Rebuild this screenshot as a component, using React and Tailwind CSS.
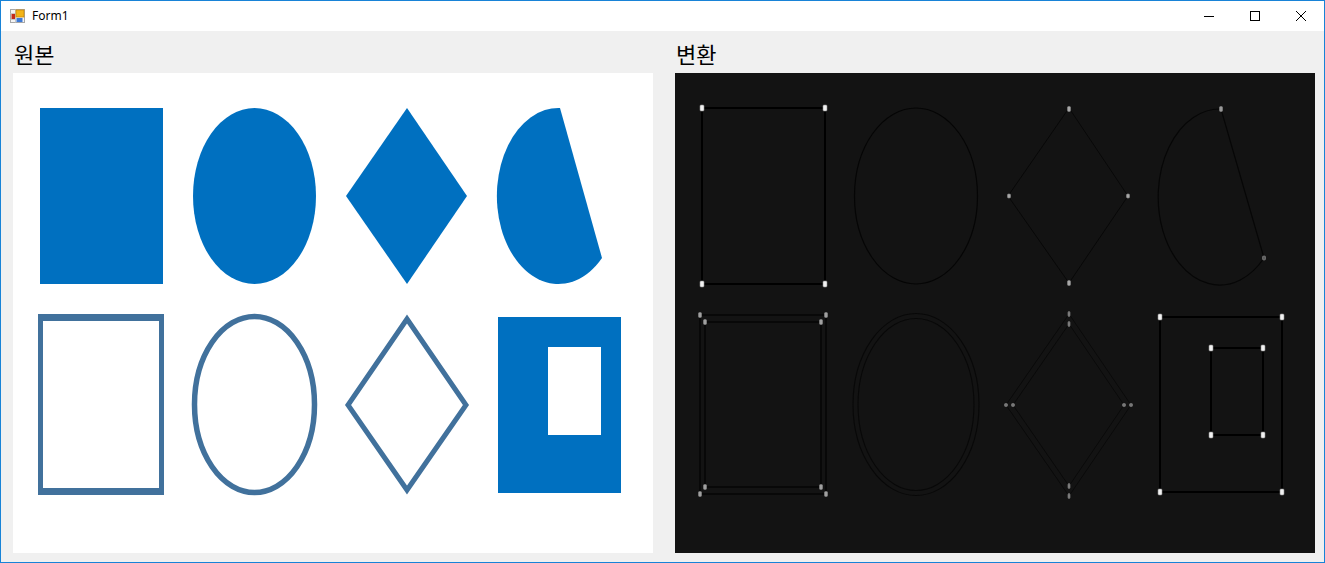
import React from 'react';

const BLUE = '#0070c0';
const STEEL = '#41719c';

const Mark = ({ x, y, w = 4, h = 6, fill = '#f2f2f2' }) => (
  <rect x={x - w / 2} y={y - h / 2} width={w} height={h} rx={1} fill={fill} stroke="#8a8a8a" strokeWidth={0.6} />
);

const FormIcon = () => (
  <svg width="15" height="14" viewBox="0 0 15 14">
    <rect x="0.5" y="0.5" width="14" height="13" fill="#f4f4f4" stroke="#a8a8a8" />
    <path d="M0.5 4.5 H5.5 M5.5 0.5 V13.5 M0.5 10.5 H5.5" stroke="#c8c8c8" strokeWidth="1" />
    <rect x="6" y="1" width="8" height="7" fill="#f2b418" stroke="#c8870a" strokeWidth="0.8" />
    <rect x="1.5" y="5" width="3.5" height="5" fill="#c42a1a" />
    <rect x="6.5" y="9" width="6" height="4" fill="#3d79d6" />
  </svg>
);

const Original = () => (
  <svg width="640" height="480" viewBox="0 0 640 480" className="block">
    <rect x="0" y="0" width="640" height="480" fill="#ffffff" />
    {/* row 1 */}
    <rect x="27" y="35" width="123" height="176" fill={BLUE} />
    <ellipse cx="241.5" cy="123" rx="61.5" ry="88" fill={BLUE} />
    <path d="M394 35 L454 123 L394 211 L333 123 Z" fill={BLUE} />
    <path d="M547 35 A61.5 88 0 1 0 589 185 Z" fill={BLUE} />
    {/* row 2 */}
    <path d="M25 241 H151 V422 H25 Z M30 248 V415 H146 V248 Z" fill={STEEL} fillRule="evenodd" />
    <ellipse cx="241.5" cy="331.5" rx="60" ry="88" fill="none" stroke={STEEL} strokeWidth="5.5" />
    <path d="M394 246 L453 332 L394 417 L335 332 Z" fill="none" stroke={STEEL} strokeWidth="5" strokeLinejoin="miter" />
    <path d="M485 244 H608 V420 H485 Z M535 274 V362 H588 V274 Z" fill={BLUE} fillRule="evenodd" />
  </svg>
);

const Converted = () => (
  <svg width="640" height="480" viewBox="0 0 640 480" className="block">
    <rect x="0" y="0" width="640" height="480" fill="#131313" />
    {/* row 1 */}
    <rect x="27" y="35" width="123" height="176" fill="none" stroke="#000" strokeWidth="2" />
    <ellipse cx="241" cy="123" rx="61.5" ry="88" fill="none" stroke="#050505" strokeWidth="1.2" />
    <path d="M394 35 L453 123 L394 210 L333 123 Z" fill="none" stroke="#080808" strokeWidth="1" />
    <path d="M546 36 A61.5 88 0 1 0 589 185 Z" fill="none" stroke="#060606" strokeWidth="1.2" />
    <Mark x={27} y={35} />
    <Mark x={150} y={35} />
    <Mark x={27} y={211} />
    <Mark x={150} y={211} />
    <Mark x={394} y={36} w={3} h={5} fill="#a8a8a8" />
    <Mark x={334} y={123} w={3} h={4} fill="#a8a8a8" />
    <Mark x={453} y={123} w={3} h={4} fill="#a8a8a8" />
    <Mark x={394} y={210} w={3} h={5} fill="#a8a8a8" />
    <Mark x={546} y={36} w={3} h={5} fill="#9a9a9a" />
    <Mark x={589} y={185} w={3} h={4} fill="#5e5e5e" />
    {/* row 2 */}
    <rect x="25" y="242" width="126" height="179" fill="none" stroke="#070707" strokeWidth="1.6" />
    <rect x="30" y="249" width="116" height="165" fill="none" stroke="#070707" strokeWidth="1.6" />
    <ellipse cx="241" cy="331.5" rx="63" ry="91" fill="none" stroke="#080808" strokeWidth="1.1" />
    <ellipse cx="241" cy="331.5" rx="58" ry="86" fill="none" stroke="#080808" strokeWidth="1.1" />
    <path d="M394 241 L456 332 L394 423 L331 332 Z" fill="none" stroke="#0a0a0a" strokeWidth="1" />
    <path d="M394 251 L449 332 L394 413 L338 332 Z" fill="none" stroke="#0a0a0a" strokeWidth="1" />
    <rect x="485" y="244" width="122" height="175" fill="none" stroke="#000" strokeWidth="2" />
    <rect x="536" y="275" width="52" height="87" fill="none" stroke="#000" strokeWidth="2" />
    <Mark x={25} y={242} w={3} h={5} fill="#a0a0a0" />
    <Mark x={151} y={242} w={3} h={5} fill="#a0a0a0" />
    <Mark x={25} y={421} w={3} h={5} fill="#a0a0a0" />
    <Mark x={151} y={421} w={3} h={5} fill="#a0a0a0" />
    <Mark x={30} y={249} w={3} h={5} fill="#a0a0a0" />
    <Mark x={146} y={249} w={3} h={5} fill="#a0a0a0" />
    <Mark x={30} y={414} w={3} h={5} fill="#a0a0a0" />
    <Mark x={146} y={414} w={3} h={5} fill="#a0a0a0" />
    <Mark x={394} y={241} w={2} h={5} fill="#777" />
    <Mark x={394} y={251} w={2} h={5} fill="#777" />
    <Mark x={331} y={332} w={3} h={3} fill="#777" />
    <Mark x={338} y={332} w={3} h={3} fill="#777" />
    <Mark x={449} y={332} w={3} h={3} fill="#777" />
    <Mark x={456} y={332} w={3} h={3} fill="#777" />
    <Mark x={394} y={413} w={2} h={5} fill="#777" />
    <Mark x={394} y={423} w={2} h={5} fill="#777" />
    <Mark x={485} y={244} />
    <Mark x={607} y={244} />
    <Mark x={485} y={419} />
    <Mark x={607} y={419} />
    <Mark x={536} y={275} />
    <Mark x={588} y={275} />
    <Mark x={536} y={362} />
    <Mark x={588} y={362} />
  </svg>
);

const Column = ({ label, children }) => (
  <div className="flex flex-col w-[640px]">
    <div className="h-[42px] pt-[8px] pl-[1px] text-[22px] leading-[28px] text-black font-['Noto_Sans_CJK_KR',sans-serif]">
      {label}
    </div>
    {children}
  </div>
);

export default function App() {
  return (
    <div className="w-[1325px] h-[563px] border border-[#1883d7] bg-[#f0f0f0] flex flex-col overflow-hidden">
      <div className="h-[30px] bg-white flex items-center">
        <div className="pl-[9px] pr-[7px] flex items-center">
          <FormIcon />
        </div>
        <span className="text-[12px] text-black font-['Noto_Sans',sans-serif]">Form1</span>
        <div className="ml-auto flex h-full">
          <div className="w-[46px] h-full flex items-center justify-center">
            <svg width="10" height="10" viewBox="0 0 10 10">
              <path d="M0 5.5 H10" stroke="#000" strokeWidth="1" />
            </svg>
          </div>
          <div className="w-[46px] h-full flex items-center justify-center">
            <svg width="10" height="10" viewBox="0 0 10 10">
              <rect x="0.5" y="0.5" width="9" height="9" fill="none" stroke="#000" strokeWidth="1" />
            </svg>
          </div>
          <div className="w-[46px] h-full flex items-center justify-center">
            <svg width="10" height="10" viewBox="0 0 10 10">
              <path d="M0 0 L10 10 M10 0 L0 10" stroke="#000" strokeWidth="1" />
            </svg>
          </div>
        </div>
      </div>
      <div className="flex gap-[22px] pl-[12px]">
        <Column label="원본">
          <Original />
        </Column>
        <Column label="변환">
          <Converted />
        </Column>
      </div>
    </div>
  );
}
